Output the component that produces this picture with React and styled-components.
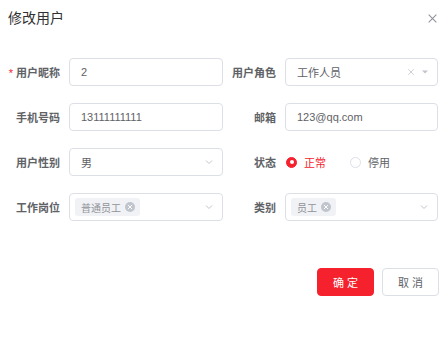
import React from 'react';
import styled, { createGlobalStyle } from 'styled-components';

const GlobalStyle = createGlobalStyle`
    body {
        margin:0;
        background:#fff;
        font-family:"Liberation Sans","Noto Sans CJK SC",sans-serif;
    }
`;

const PRIMARY = '#f5222d';

const Dialog = styled.div`
    width:448px;height:353px;
    box-sizing:border-box;
    background:#fff;
`;

const Header = styled.div`
    display:flex;
    justify-content:space-between;
    align-items:center;
    padding:8px 10px 0 8px;
    height:20px;
`;

const Title = styled.span`
    font-size:14px;
    color:#303133;
    line-height:20px;
`;

const CloseBtn = styled.span`
    display:flex;
    color:#909399;
`;

const Form = styled.div`
    display:grid;
    grid-template-columns:215px 206px;
    column-gap:9px;
    row-gap:17px;
    padding:30px 0 0 8px;
`;

const Item = styled.div`
    display:flex;
    align-items:center;
    height:28px;
`;

const Label = styled.label`
    width:${p => p.$w}px;
    flex-shrink:0;
    box-sizing:border-box;
    padding-right:9px;
    text-align:right;
    font-size:11px;
    font-weight:bold;
    color:#606266;
`;

const Star = styled.span`
    color:${PRIMARY};
    margin-right:3px;
    font-weight:normal;
`;

const Box = styled.div`
    flex:1;
    height:28px;
    box-sizing:border-box;
    border:1px solid #dcdfe6;
    border-radius:4px;
    display:flex;
    align-items:center;
    padding:0 8px 0 11px;
    font-size:11px;
    color:#606266;
    gap:6px;
`;

const Value = styled.span`
    flex:1;
`;

const TagBox = styled(Box)`
    padding-left:5px;
`;

const Tag = styled.span`
    display:inline-flex;
    align-items:center;
    gap:4px;
    height:18px;
    padding:0 5px 0 6px;
    background:#f0f2f5;
    border-radius:3px;
    font-size:10px;
    color:#909399;
`;

const TagClose = styled.span`
    width:10px;height:10px;
    border-radius:50%;
    background:#c0c4cc;
    display:flex;
    align-items:center;
    justify-content:center;
`;

const RadioGroup = styled.div`
    display:flex;
    align-items:center;
    gap:24px;
    padding-left:1px;
`;

const Radio = styled.span`
    display:flex;
    align-items:center;
    gap:7px;
    font-size:11px;
    color:${p => p.$on ? PRIMARY : '#606266'};
`;

const Dot = styled.span`
    width:11px;height:11px;
    box-sizing:border-box;
    border-radius:50%;
    border:1px solid ${p => p.$on ? PRIMARY : '#dcdfe6'};
    background:${p => p.$on ? PRIMARY : '#fff'};
    display:flex;
    align-items:center;
    justify-content:center;
    &::after{
        content:'';
        width:4px;height:4px;
        border-radius:50%;
        background:#fff;
        display:${p => p.$on ? 'block' : 'none'};
    }
`;

const Footer = styled.div`
    display:flex;
    justify-content:flex-end;
    gap:8px;
    padding:47px 9px 0 0;
`;

const Button = styled.button`
    width:${p => p.$w}px;
    height:28px;
    border-radius:4px;
    font-family:inherit;
    font-size:11px;
    letter-spacing:3px;
    text-indent:3px;
    border:1px solid ${p => p.$primary ? PRIMARY : '#dcdfe6'};
    background:${p => p.$primary ? PRIMARY : '#fff'};
    color:${p => p.$primary ? '#fff' : '#606266'};
`;

const Chevron = () => (
    <svg width="10" height="10" viewBox="0 0 10 10">
        <path d="M2 3.5 L5 6.5 L8 3.5" fill="none" stroke="#c0c4cc" strokeWidth="1" />
    </svg>
);

const Caret = () => (
    <svg width="8" height="8" viewBox="0 0 8 8">
        <path d="M1 2.5 H7 L4 5.5 Z" fill="#c0c4cc" />
    </svg>
);

const Cross = ({ size = 8, color = '#c0c4cc', w = 1 }) => (
    <svg width={size} height={size} viewBox="0 0 10 10">
        <path d="M1.5 1.5 L8.5 8.5 M8.5 1.5 L1.5 8.5" stroke={color} strokeWidth={w} />
    </svg>
);

const TagItem = ({ text }) => (
    <Tag>
        {text}
        <TagClose><Cross size={6} color="#fff" w={1.6} /></TagClose>
    </Tag>
);

const App = () => {
    return (
        <Dialog>
            <GlobalStyle />
            <Header>
                <Title>修改用户</Title>
                <CloseBtn><Cross size={11} color="#909399" /></CloseBtn>
            </Header>

            <Form>
                <Item>
                    <Label $w={61}><Star>*</Star>用户昵称</Label>
                    <Box><Value>2</Value></Box>
                </Item>
                <Item>
                    <Label $w={53}>用户角色</Label>
                    <Box>
                        <Value>工作人员</Value>
                        <Cross size={8} />
                        <Caret />
                    </Box>
                </Item>

                <Item>
                    <Label $w={61}>手机号码</Label>
                    <Box><Value>13111111111</Value></Box>
                </Item>
                <Item>
                    <Label $w={53}>邮箱</Label>
                    <Box><Value>123@qq.com</Value></Box>
                </Item>

                <Item>
                    <Label $w={61}>用户性别</Label>
                    <Box><Value>男</Value><Chevron /></Box>
                </Item>
                <Item>
                    <Label $w={53}>状态</Label>
                    <RadioGroup>
                        <Radio $on><Dot $on />正常</Radio>
                        <Radio><Dot />停用</Radio>
                    </RadioGroup>
                </Item>

                <Item>
                    <Label $w={61}>工作岗位</Label>
                    <TagBox><Value><TagItem text="普通员工" /></Value><Chevron /></TagBox>
                </Item>
                <Item>
                    <Label $w={53}>类别</Label>
                    <TagBox><Value><TagItem text="员工" /></Value><Chevron /></TagBox>
                </Item>
            </Form>

            <Footer>
                <Button $primary $w={57}>确定</Button>
                <Button $w={57}>取消</Button>
            </Footer>
        </Dialog>
    )
}

export default App;
